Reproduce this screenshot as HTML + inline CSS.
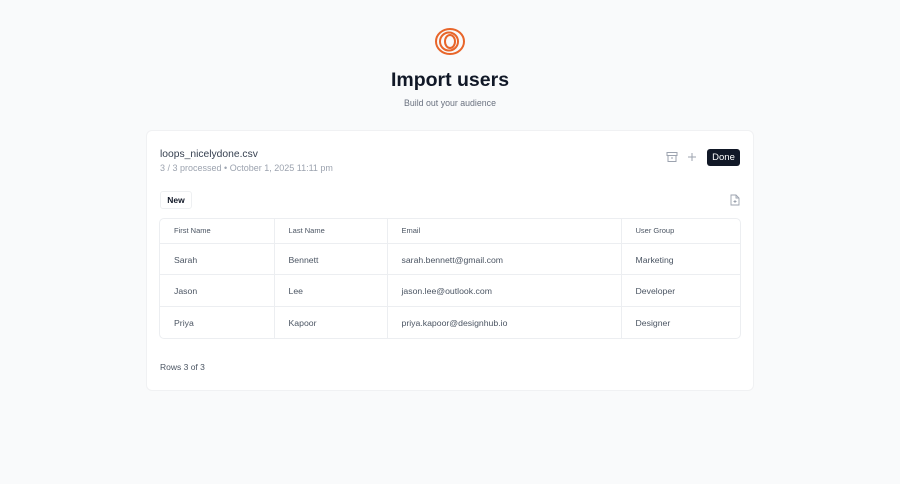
<!DOCTYPE html>
<html><head><style>
*{box-sizing:border-box;margin:0;padding:0}
body{width:900px;height:484px;background:#f9fafb;font-family:"Liberation Sans",sans-serif;color:#111827;position:relative;overflow:hidden}
.abs{position:absolute}
.card{left:146px;top:130px;width:608px;height:261px;background:#fff;border-radius:6px;border:1px solid #f0f1f3}
table{position:absolute;left:160px;top:219px;width:580px;border-collapse:collapse;font-size:8.7px}
td,th{border:1px solid #eceef1;text-align:left;padding-left:14px;color:#4b5563;font-weight:normal}
th{height:24px;font-size:7.5px;color:#4b5563}
td{height:31.5px;padding-top:2px}
table{border-style:hidden;outline:1px solid #eceef1;border-radius:4px}
</style></head><body>
<svg class="abs" style="left:434px;top:27px" width="32" height="29" viewBox="0 0 32 29"><g fill="none" stroke="#e8652a" stroke-width="2"><ellipse cx="16" cy="14.5" rx="14" ry="12.5"/><ellipse cx="15" cy="14.5" rx="9" ry="9"/><ellipse cx="16" cy="14.5" rx="5" ry="6.5"/></g></svg>
<div class="abs" style="left:0;width:900px;top:69px;text-align:center;font-size:19.5px;font-weight:bold;color:#111827">Import users</div>
<div class="abs" style="left:0;width:900px;top:98px;text-align:center;font-size:8.8px;color:#6b7280">Build out your audience</div>
<div class="abs card"></div>
<div class="abs" style="left:160px;top:149px;font-size:10.3px;color:#374151">loops_nicelydone.csv</div>
<div class="abs" style="left:160px;top:163px;font-size:9px;color:#9ca3af">3 / 3 processed • October 1, 2025 11:11 pm</div>
<svg class="abs" style="left:666px;top:151px" width="12" height="12" viewBox="0 0 12 12"><g fill="none" stroke="#9ca3af" stroke-width="1"><rect x="1" y="1.5" width="10" height="3"/><path d="M2 4.5v6h8v-6M5 7h2"/></g></svg>
<svg class="abs" style="left:687px;top:152px" width="10" height="10" viewBox="0 0 10 10"><path d="M5 1v8M1 5h8" stroke="#9ca3af" stroke-width="1"/></svg>
<div class="abs" style="left:707px;top:149px;width:33px;height:17px;background:#111827;color:#fff;border-radius:3px;font-size:9.5px;text-align:center;line-height:17px">Done</div>
<div class="abs" style="left:160px;top:191px;width:32px;height:18px;border:1px solid #eef0f2;border-radius:3px;font-size:8.5px;font-weight:bold;text-align:center;line-height:16px">New</div>
<svg class="abs" style="left:730px;top:194px" width="10" height="12" viewBox="0 0 10 12"><g fill="none" stroke="#9ca3af" stroke-width="0.9"><path d="M1 1h5l3 3v7H1z M6 1v3h3M5 6v3M3.5 7.5h3"/></g></svg>
<table>
<tr><th style="width:114px">First Name</th><th style="width:113px">Last Name</th><th style="width:234px">Email</th><th>User Group</th></tr>
<tr><td>Sarah</td><td>Bennett</td><td>sarah.bennett@gmail.com</td><td>Marketing</td></tr>
<tr><td>Jason</td><td>Lee</td><td>jason.lee@outlook.com</td><td>Developer</td></tr>
<tr><td>Priya</td><td>Kapoor</td><td>priya.kapoor@designhub.io</td><td>Designer</td></tr>
</table>
<div class="abs" style="left:160px;top:362px;font-size:8.5px;color:#4b5563">Rows 3 of 3</div>
</body></html>
